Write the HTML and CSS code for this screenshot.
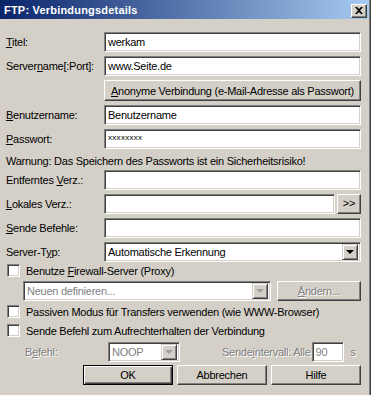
FILE: index.html
```html
<!DOCTYPE html>
<html lang="de">
<head>
    <meta charset="UTF-8">
    <title>FTP: Verbindungsdetails</title>
    <link rel="stylesheet" href="styles.css">
</head>
<body>
    <div class="window">
        <div class="titlebar">
            <span class="title">FTP: Verbindungsdetails</span>
            <span class="close">
                <svg width="8" height="7" viewBox="0 0 8 7"><path d="M0 0h2l2 2 2-2h2L5 3.5 8 7H6L4 5 2 7H0l3-3.5z" fill="#000"/></svg>
            </span>
        </div>
        <div class="content">
            <div class="form">
                <label><u>T</u>itel:</label>
                <div class="field">werkam</div>

                <label>Server<u>n</u>ame[:Port]:</label>
                <div class="field">www.Seite.de</div>

                <span></span>
                <div class="btn"><span><u>A</u>nonyme Verbindung (e-Mail-Adresse als Passwort)</span></div>

                <label><u>B</u>enutzername:</label>
                <div class="field">Benutzername</div>

                <label><u>P</u>asswort:</label>
                <div class="field pw">xxxxxxxx</div>

                <div class="warning">Warnung: Das Speichern des Passworts ist ein Sicherheitsrisiko!</div>

                <label>Entferntes <u>V</u>erz.:</label>
                <div class="field"></div>

                <label><u>L</u>okales Verz.:</label>
                <div class="with-btn">
                    <div class="field grow"></div>
                    <div class="btn small">&gt;&gt;</div>
                </div>

                <label><u>S</u>ende Befehle:</label>
                <div class="field"></div>

                <label>Server-T<u>y</u>p:</label>
                <div class="field combo">
                    <span class="grow">Automatische Erkennung</span>
                    <span class="arrow"><i></i></span>
                </div>
            </div>

            <div class="check-row"><span class="box"></span><span>Benutze <u>F</u>irewall-Server (Proxy)</span></div>

            <div class="proxy-row">
                <div class="field combo wide disabled-field">
                    <span class="grow">Neuen definieren...</span>
                    <span class="arrow off"><i></i></span>
                </div>
                <div class="btn change disabled"><span><u>Ä</u>ndern...</span></div>
            </div>

            <div class="check-row"><span class="box"></span><span>Passiven Modus für Transfers verwenden (wie WWW-Browser)</span></div>
            <div class="check-row"><span class="box"></span><span>Sende Befehl zum Aufrechterhalten der Verbindung</span></div>

            <div class="keepalive">
                <span class="disabled befehl">B<u>e</u>fehl:</span>
                <div class="field combo noop disabled-field">
                    <span class="grow">NOOP</span>
                    <span class="arrow off"><i></i></span>
                </div>
                <span class="disabled interval">Sende<u>i</u>ntervall: Alle</span>
                <div class="field secs disabled-field">90</div>
                <span class="disabled unit">s</span>
            </div>

            <div class="actions">
                <div class="btn action default">OK</div>
                <div class="btn action">Abbrechen</div>
                <div class="btn action">Hilfe</div>
            </div>
        </div>
    </div>
</body>
</html>
```

FILE: styles.css
```css
body {
    margin: 0;
    background: #ffffff;
    font-family: 'Liberation Sans', Arial, sans-serif;
    font-size: 11px;
    letter-spacing: -0.25px;
    color: #000;
}
.window {
    width: 370px;
    height: 395px;
    background: #d4d0c8;
    border-right: 1px solid #808080;
    box-shadow: 1px 0 0 #404040;
    box-sizing: border-box;
}
.titlebar {
    height: 19px;
    display: flex;
    align-items: center;
    justify-content: space-between;
    padding: 0 2px 0 4px;
    background: linear-gradient(to right, #0a246a, #a6caf0);
}
.title {
    color: #fff;
    font-weight: bold;
    font-size: 11px;
    letter-spacing: 0.2px;
}
.close {
    width: 14px;
    height: 12px;
    display: flex;
    align-items: center;
    justify-content: center;
    background: #d4d0c8;
    border: 1px solid;
    border-color: #fff #404040 #404040 #fff;
    box-shadow: inset -1px -1px #808080;
    margin-top: 2px;
}
.content {
    padding: 13px 8px 0 6px;
}
.form {
    display: grid;
    grid-template-columns: 98px 1fr;
    row-gap: 4px;
    align-items: center;
}
.field {
    height: 20px;
    box-sizing: border-box;
    background: #fff;
    border: 1px solid;
    border-color: #808080 #fff #fff #808080;
    box-shadow: inset 1px 1px #404040, inset -1px -1px #d4d0c8;
    padding: 0 3px;
    display: flex;
    align-items: center;
    white-space: nowrap;
}
.pw {
    font-size: 8px;
    letter-spacing: 0.3px;
    align-items: flex-start;
    padding-top: 3px;
}
.btn {
    height: 21px;
    box-sizing: border-box;
    background: #d4d0c8;
    border: 1px solid;
    border-color: #fff #404040 #404040 #fff;
    box-shadow: inset -1px -1px #808080;
    display: flex;
    align-items: center;
    justify-content: center;
    white-space: nowrap;
}
.warning {
    grid-column: 1 / 3;
    height: 13px;
    line-height: 13px;
    margin-top: 2px;
    margin-bottom: -2px;
}
.with-btn {
    display: flex;
    gap: 2px;
}
.grow {
    flex: 1;
}
.small {
    width: 24px;
    height: 20px;
    padding-bottom: 2px;
}
.combo {
    padding-right: 2px;
}
.arrow {
    width: 16px;
    height: 16px;
    box-sizing: border-box;
    background: #d4d0c8;
    border: 1px solid;
    border-color: #d4d0c8 #404040 #404040 #d4d0c8;
    box-shadow: inset 1px 1px #fff, inset -1px -1px #808080;
    display: flex;
    align-items: center;
    justify-content: center;
}
.arrow i {
    width: 0;
    height: 0;
    border-left: 4px solid transparent;
    border-right: 4px solid transparent;
    border-top: 4px solid #000;
}
.arrow.off i {
    border-top-color: #a0a0a0;
}
.check-row {
    display: flex;
    align-items: center;
    height: 17px;
    padding-left: 1px;
    white-space: nowrap;
}
.box {
    width: 13px;
    height: 13px;
    box-sizing: border-box;
    background: #fff;
    border: 1px solid;
    border-color: #808080 #fff #fff #808080;
    box-shadow: inset 1px 1px #404040, inset -1px -1px #d4d0c8;
    margin-right: 6px;
}
.proxy-row {
    display: flex;
    gap: 6px;
    margin: 2px 0 2px 17px;
}
.proxy-row + .check-row {
    margin-bottom: 2px;
}
.wide {
    width: 248px;
    padding-right: 2px;
}
.disabled-field {
    color: #808080;
}
.disabled {
    color: #808080;
    text-shadow: 1px 1px #fff;
    white-space: nowrap;
}
.change {
    flex: 1;
    height: 20px;
}
.keepalive {
    display: flex;
    align-items: center;
    margin-top: 3px;
}
.befehl {
    margin-left: 19px;
    width: 83px;
}
.noop {
    width: 72px;
}
.interval {
    margin-left: 42px;
    margin-right: 1px;
}
.secs {
    width: 32px;
}
.unit {
    margin-left: 7px;
}
.actions {
    display: flex;
    justify-content: flex-end;
    gap: 4px;
    margin-top: 3px;
}
.action {
    width: 90px;
    height: 20px;
}
.default {
    border-color: #000;
    box-shadow: inset 1px 1px #fff, inset -1px -1px #404040, inset -2px -2px #808080;
}
```
